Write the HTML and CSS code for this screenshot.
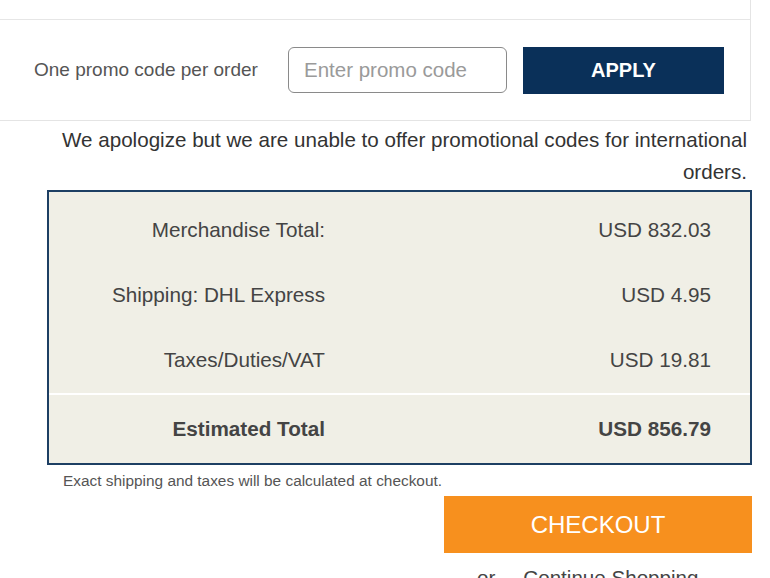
FILE: index.html
```html
<!DOCTYPE html>
<html lang="en">
<head>
<meta charset="utf-8">
<title>Cart summary</title>
<link rel="stylesheet" href="styles.css">
</head>
<body>
<div class="page">
  <div class="panel">
    <div class="panel-top"></div>
    <div class="promo-row">
      <span class="promo-label">One promo code per order</span>
      <input class="promo-input" type="text" placeholder="Enter promo code">
      <button class="apply-btn" type="button">APPLY</button>
    </div>
  </div>
  <p class="notice">We apologize but we are unable to offer promotional codes for international orders.</p>
  <div class="summary">
    <div class="row"><span class="label">Merchandise Total:</span><span class="value">USD 832.03</span></div>
    <div class="row"><span class="label">Shipping: DHL Express</span><span class="value">USD 4.95</span></div>
    <div class="row"><span class="label">Taxes/Duties/VAT</span><span class="value">USD 19.81</span></div>
    <div class="row total"><span class="label">Estimated Total</span><span class="value">USD 856.79</span></div>
  </div>
  <p class="note">Exact shipping and taxes will be calculated at checkout.</p>
  <button class="checkout-btn" type="button">CHECKOUT</button>
  <div class="continue"><span class="or">or</span><a class="continue-link" href="#">Continue Shopping</a></div>
</div>
</body>
</html>
```
FILE: styles.css
```css
html, body {
  margin: 0;
  padding: 0;
  background: #ffffff;
}
body {
  font-family: "Liberation Sans", Arial, sans-serif;
  color: #333333;
}
.page {
  width: 770px;
  display: flex;
  flex-direction: column;
}
.panel {
  width: 750px;
  border-right: 1px solid #e4e4e4;
  border-bottom: 1px solid #e4e4e4;
}
.panel-top {
  height: 19px;
  border-bottom: 1px solid #e6e6e6;
}
.promo-row {
  height: 100px;
  display: flex;
  align-items: center;
  padding-left: 34px;
}
.promo-label {
  font-size: 19px;
  color: #555555;
  width: 254px;
}
.promo-input {
  box-sizing: border-box;
  width: 219px;
  height: 46px;
  border: 1px solid #8a8a8a;
  border-radius: 6px;
  padding: 0 0 0 15px;
  font-family: "Liberation Sans", Arial, sans-serif;
  font-size: 20.5px;
  color: #333;
  background: #fff;
  outline: none;
}
.promo-input::placeholder {
  color: #9a9a9a;
}
.apply-btn {
  box-sizing: border-box;
  margin-left: 16px;
  width: 201px;
  height: 47px;
  border: none;
  background: #0a3059;
  color: #ffffff;
  font-family: "Liberation Sans", Arial, sans-serif;
  font-weight: bold;
  font-size: 20px;
  padding: 0;
}
.notice {
  margin: 3px 23px 0 56px;
  text-align: right;
  font-size: 20.6px;
  line-height: 32px;
  color: #333333;
}
.summary {
  box-sizing: border-box;
  margin: 2px 0 0 47px;
  width: 705px;
  border: 2px solid #1d3f63;
  background: #f0efe6;
  padding-top: 5px;
  display: flex;
  flex-direction: column;
}
.row {
  height: 65px;
  display: flex;
  align-items: center;
  font-size: 20.7px;
  color: #444444;
}
.row .label {
  width: 276px;
  text-align: right;
}
.row .value {
  width: 386px;
  text-align: right;
}
.row.total {
  height: 68px;
  border-top: 2px solid #ffffff;
  font-weight: bold;
  margin-top: 1px;
}
.note {
  margin: 7px 0 0 63px;
  font-size: 15.4px;
  color: #555555;
  line-height: 18px;
}
.checkout-btn {
  margin: 6px 0 0 444px;
  width: 308px;
  height: 57px;
  border: none;
  background: #f7901e;
  color: #ffffff;
  font-family: "Liberation Sans", Arial, sans-serif;
  font-size: 24px;
  padding: 0;
}
.continue {
  margin: 14px 0 0 477px;
  display: flex;
  gap: 28px;
  font-size: 20.6px;
  color: #444444;
  line-height: 22px;
}
.continue-link {
  color: #444444;
  text-decoration: none;
}
```
